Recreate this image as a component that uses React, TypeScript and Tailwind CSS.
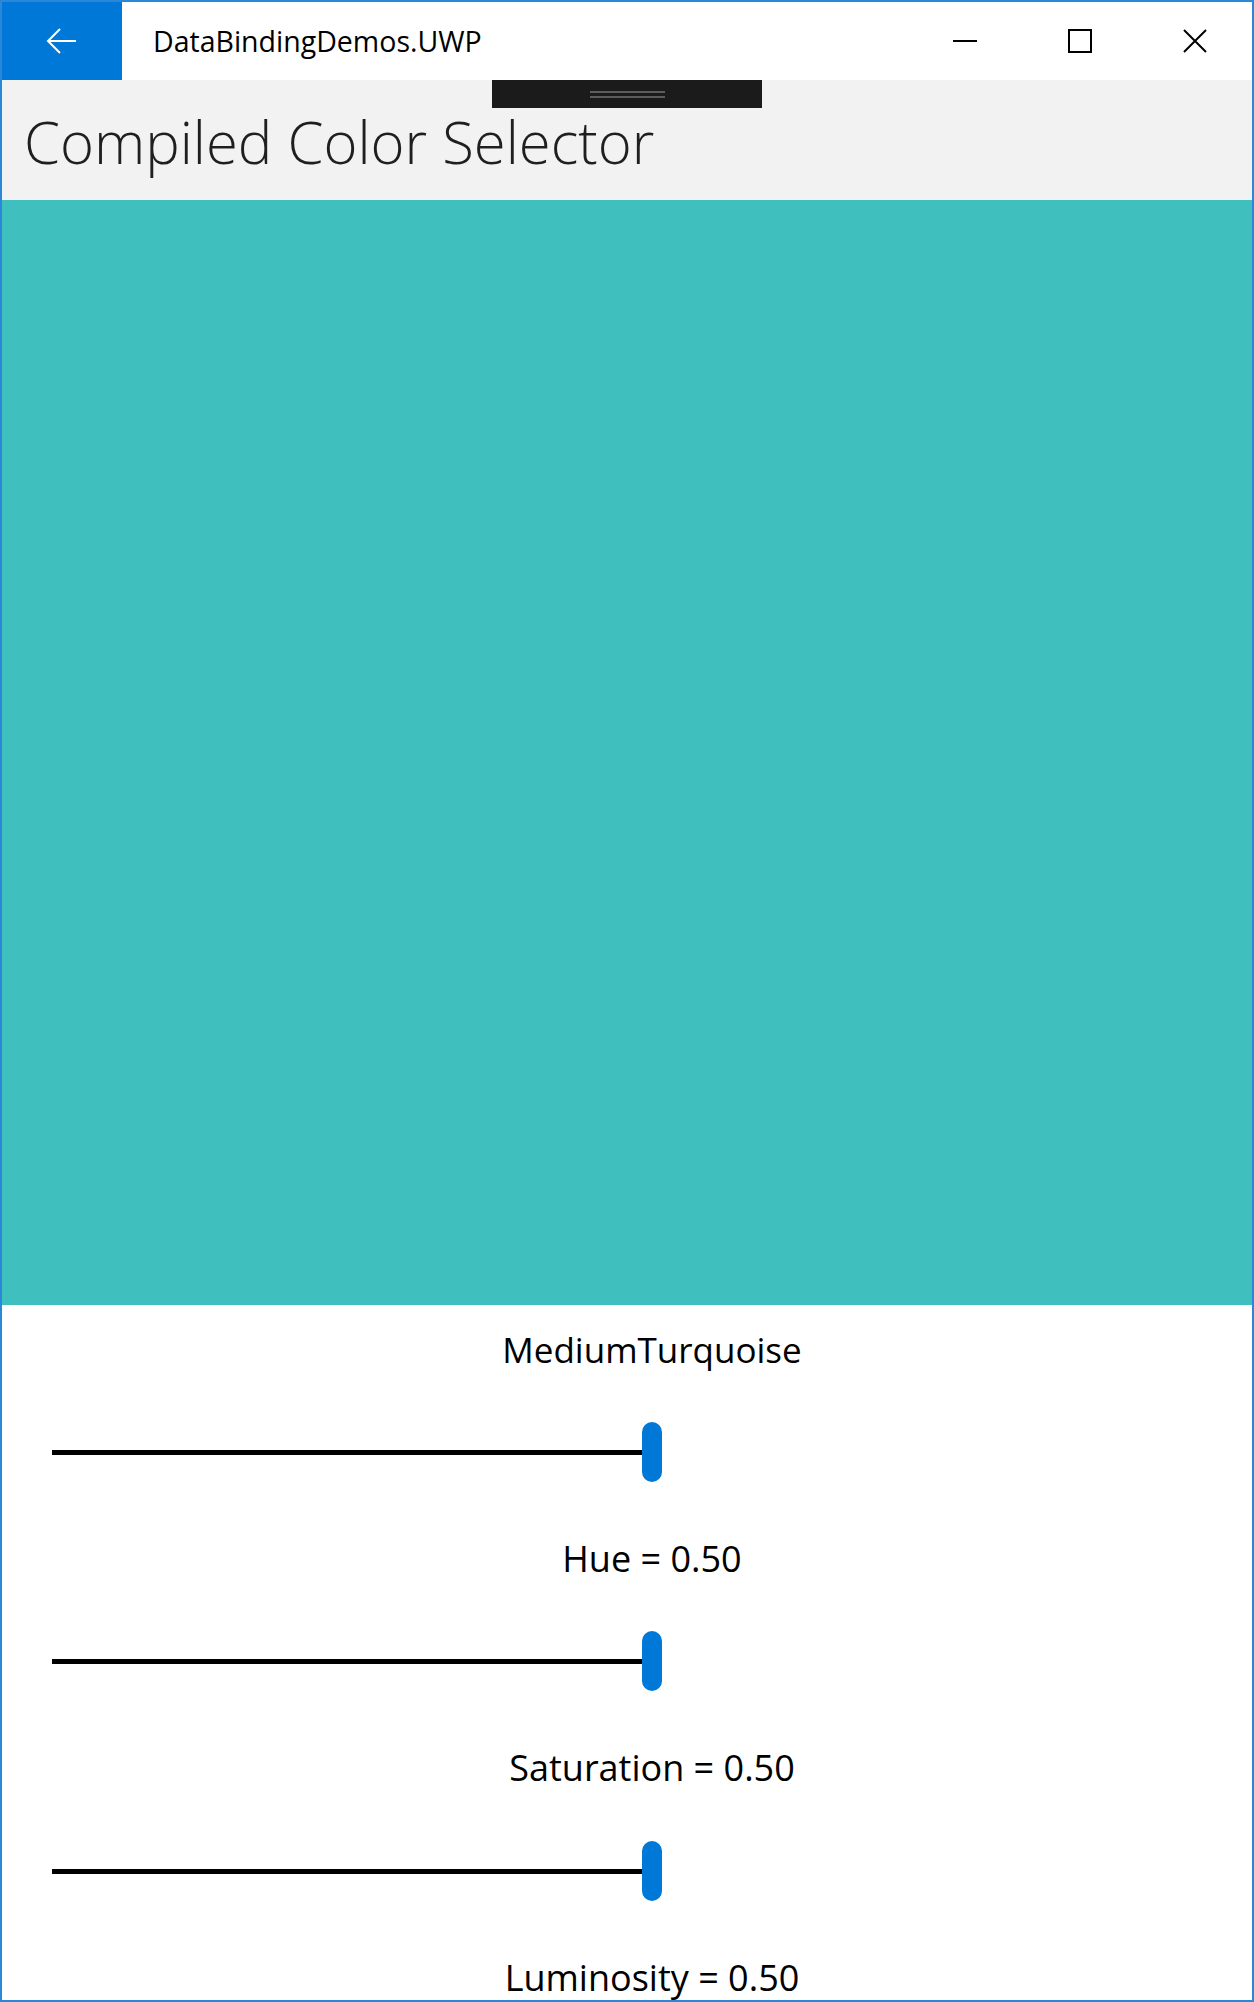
import React from "react";

const FONT = "font-['Open_Sans','Noto_Sans',sans-serif]";

function Slider({ value }: { value: number }) {
  // thumb is 20px wide, track runs under it
  return (
    <div className="relative h-[60px] w-full">
      <div className="absolute inset-x-0 top-[28px] h-[5px] bg-white" />
      <div
        className="absolute left-0 top-[28px] h-[5px] bg-black"
        style={{ width: `calc((100% - 20px) * ${value})` }}
      />
      <div
        className="absolute top-0 h-[60px] w-[20px] rounded-[10px] bg-[#0078d7]"
        style={{ left: `calc((100% - 20px) * ${value})` }}
      />
    </div>
  );
}

function CaptionButton({ children }: { children: React.ReactNode }) {
  return (
    <div className="flex h-full w-[115px] items-center justify-center">
      {children}
    </div>
  );
}

export default function App() {
  const rows = [
    { label: "Hue = 0.50", h: "h-[96px]", sh: "h-[108px]" },
    { label: "Saturation = 0.50", h: "h-[106px]", sh: "h-[100px]" },
  ];

  return (
    <div
      className={`relative box-border flex h-[2002px] w-[1254px] flex-col overflow-hidden border-2 border-[#2b88d8] bg-white ${FONT}`}
    >
      {/* title bar */}
      <div className="flex h-[78px] shrink-0 items-center bg-white">
        <div className="flex h-full w-[120px] items-center justify-center bg-[#0078d7]">
          <svg width="32" height="28" viewBox="0 0 32 28" fill="none">
            <path
              d="M30 14H3M14 2L2 14l12 12"
              stroke="white"
              strokeWidth="2"
            />
          </svg>
        </div>
        <div className="pl-[31px] text-[28.5px] leading-none text-black">
          DataBindingDemos.UWP
        </div>
        <div className="ml-auto flex h-full">
          <CaptionButton>
            <svg width="24" height="24" viewBox="0 0 24 24">
              <path d="M0 12h24" stroke="black" strokeWidth="2" />
            </svg>
          </CaptionButton>
          <CaptionButton>
            <svg width="24" height="24" viewBox="0 0 24 24" fill="none">
              <rect x="1" y="1" width="22" height="22" stroke="black" strokeWidth="2" />
            </svg>
          </CaptionButton>
          <CaptionButton>
            <svg width="24" height="24" viewBox="0 0 24 24" fill="none">
              <path d="M1 1l22 22M23 1L1 23" stroke="black" strokeWidth="2" />
            </svg>
          </CaptionButton>
        </div>
      </div>

      {/* page header */}
      <div className="flex h-[120px] shrink-0 items-center bg-[#f2f2f2] pl-[22px] pt-[4px]">
        <h1 className="text-[58px] font-light leading-none text-[#1f1f1f]">
          Compiled Color Selector
        </h1>
      </div>

      {/* colour swatch */}
      <div className="h-[1105px] shrink-0 bg-[#40bfbf]" />

      {/* controls */}
      <div className="flex flex-col pl-[50px] text-[36px] text-black">
        <div className="flex h-[88px] items-center justify-center text-[35px] leading-none">
          MediumTurquoise
        </div>
        <div className="flex h-[118px] items-center">
          <Slider value={0.5} />
        </div>
        {rows.map((r) => (
          <React.Fragment key={r.label}>
            <div className={`flex ${r.h} items-center justify-center leading-none`}>
              {r.label}
            </div>
            <div className={`flex ${r.sh} items-center`}>
              <Slider value={0.5} />
            </div>
          </React.Fragment>
        ))}
        <div className="flex h-[114px] items-center justify-center leading-none">
          Luminosity = 0.50
        </div>
      </div>

      {/* drag handle overlay */}
      <div className="absolute left-[490px] top-[78px] flex h-[28px] w-[270px] flex-col items-center justify-center gap-[3px] bg-[#1b1b1b]">
        <div className="h-[2px] w-[75px] bg-[#5c5c5c]" />
        <div className="h-[2px] w-[75px] bg-[#5c5c5c]" />
      </div>
    </div>
  );
}
